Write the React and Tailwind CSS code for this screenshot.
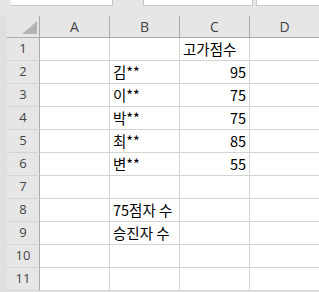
import React from 'react';

const cols = ['A', 'B', 'C', 'D'];

const rows = [
    { n: 1, b: '', c: '고가점수', cAlign: 'left' },
    { n: 2, b: '김**', c: '95' },
    { n: 3, b: '이**', c: '75' },
    { n: 4, b: '박**', c: '75' },
    { n: 5, b: '최**', c: '85' },
    { n: 6, b: '변**', c: '55' },
    { n: 7, b: '', c: '' },
    { n: 8, b: '75점자 수', c: '' },
    { n: 9, b: '승진자 수', c: '' },
    { n: 10, b: '', c: '' },
    { n: 11, b: '', c: '' },
];

const font = { fontFamily: '"Noto Sans CJK KR", "Noto Sans", sans-serif' };

const Cell = ({ children, align = 'left' }) => (
    <div
        className={`w-[70px] h-[23px] shrink-0 border-r border-b border-[#d4d4d4] bg-white flex items-end px-[3px] pb-[1px] text-[14.5px] leading-[20px] text-black whitespace-nowrap overflow-visible ${align === 'right' ? 'justify-end' : 'justify-start'}`}
    >
        {children}
    </div>
);

const App = () => {
    return (
        <div className="w-[319px] h-[292px] overflow-hidden bg-[#e6e6e6]" style={font}>
            {/* formula bar strip */}
            <div className="flex h-[6px]">
                <div className="ml-[11px] w-[102px] h-[6px] bg-white border-r border-b border-[#c8c8c8]"></div>
                <div className="ml-[30px] w-[110px] h-[6px] bg-white border-x border-b border-[#c8c8c8]"></div>
                <div className="ml-[3px] flex-1 h-[6px] bg-white border-l border-b border-[#c8c8c8]"></div>
            </div>
            <div className="h-[10px]"></div>

            <div className="flex">
                <div className="w-[7px] shrink-0 bg-[#dfdfdf] h-[280px]"></div>
                <div className="flex flex-col">
                    {/* column headers */}
                    <div className="flex h-[22px]">
                        <div className="w-[33px] h-[22px] shrink-0 border-r border-b border-[#ababab] flex items-end justify-end pr-[2px] pb-[3px]">
                            <svg width="15" height="13" viewBox="0 0 15 13">
                                <polygon points="15,0 15,13 0,13" fill="#b4b4b4" />
                            </svg>
                        </div>
                        {cols.map((c) => (
                            <div
                                key={c}
                                className="w-[70px] h-[22px] shrink-0 border-r border-b border-[#ababab] flex items-center justify-center text-[14px] text-[#444]"
                                style={{ fontFamily: '"Open Sans", "Noto Sans", sans-serif' }}
                            >
                                {c}
                            </div>
                        ))}
                    </div>

                    {rows.map((r) => (
                        <div key={r.n} className="flex">
                            <div
                                className="w-[33px] h-[23px] shrink-0 border-r border-r-[#ababab] border-b border-b-[#d4d4d4] flex items-center justify-center text-[13px] text-[#444]"
                                style={{ fontFamily: '"Open Sans", "Noto Sans", sans-serif' }}
                            >
                                {r.n}
                            </div>
                            <Cell />
                            <Cell>{r.b}</Cell>
                            <Cell align={r.cAlign === 'left' ? 'left' : 'right'}>{r.c}</Cell>
                            <Cell />
                        </div>
                    ))}
                </div>
            </div>
        </div>
    );
};

export default App;
